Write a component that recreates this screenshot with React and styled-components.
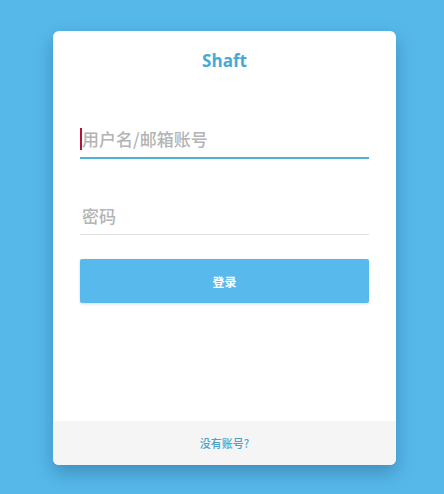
import styled, { createGlobalStyle } from 'styled-components';

const GlobalStyle = createGlobalStyle`
  html, body {
    margin: 0;
    padding: 0;
    background: #56b8e9;
    font-family: "Noto Sans", "Noto Sans CJK SC", sans-serif;
  }
`;

const Page = styled.div`
  min-height: 494px;
  padding: 31px 0 0 53px;
  box-sizing: border-box;
`;

const Card = styled.div`
  width: 343px;
  background: #fff;
  border-radius: 6px;
  overflow: hidden;
  box-shadow: 0 8px 18px rgba(20, 70, 110, 0.35);
  display: flex;
  flex-direction: column;
`;

const Body = styled.div`
  height: 390px;
  box-sizing: border-box;
  padding: 18px 27px 0;
  display: flex;
  flex-direction: column;
`;

const Title = styled.h1`
  margin: 0;
  text-align: center;
  font-family: "Open Sans", sans-serif;
  font-size: 17px;
  font-weight: 700;
  line-height: 24px;
  color: #45a9d8;
`;

const Field = styled.div`
  position: relative;
  margin-top: ${(p) => p.$top}px;
`;

const Input = styled.input`
  display: block;
  width: 100%;
  box-sizing: border-box;
  height: 39px;
  padding: 0 0 0 2px;
  border: none;
  border-bottom: ${(p) => (p.$active ? '2px solid #4db3d4' : '1px solid #e2e2e2')};
  outline: none;
  background: transparent;
  font-family: "Noto Sans CJK SC", sans-serif;
  font-size: 17px;
  font-weight: 500;
  color: #333;

  &::placeholder {
    color: #b4b4b4;
  }
`;

const Caret = styled.span`
  position: absolute;
  left: 0;
  top: 8px;
  width: 2px;
  height: 22px;
  background: #b0163c;
`;

const Button = styled.button`
  margin-top: 24px;
  height: 44px;
  border: none;
  border-radius: 2px;
  background: #58b9ec;
  color: #fff;
  font-family: "Noto Sans CJK SC", sans-serif;
  font-size: 12px;
  font-weight: 700;
  box-shadow: 0 1px 3px rgba(0, 0, 0, 0.15);
  cursor: pointer;
`;

const Footer = styled.div`
  height: 44px;
  background: #f5f5f5;
  display: flex;
  align-items: center;
  justify-content: center;
`;

const FooterLink = styled.a`
  font-family: "Noto Sans CJK SC", sans-serif;
  font-size: 11px;
  font-weight: 500;
  color: #4aa3cc;
  text-decoration: none;
`;

export default function App() {
  return (
    <>
      <GlobalStyle />
      <Page>
        <Card>
          <Body>
            <Title>Shaft</Title>

            <Field $top={47}>
              <Caret />
              <Input $active placeholder="用户名/邮箱账号" />
            </Field>

            <Field $top={37}>
              <Input type="password" placeholder="密码" />
            </Field>

            <Button>登录</Button>
          </Body>

          <Footer>
            <FooterLink href="#">没有账号?</FooterLink>
          </Footer>
        </Card>
      </Page>
    </>
  );
}
